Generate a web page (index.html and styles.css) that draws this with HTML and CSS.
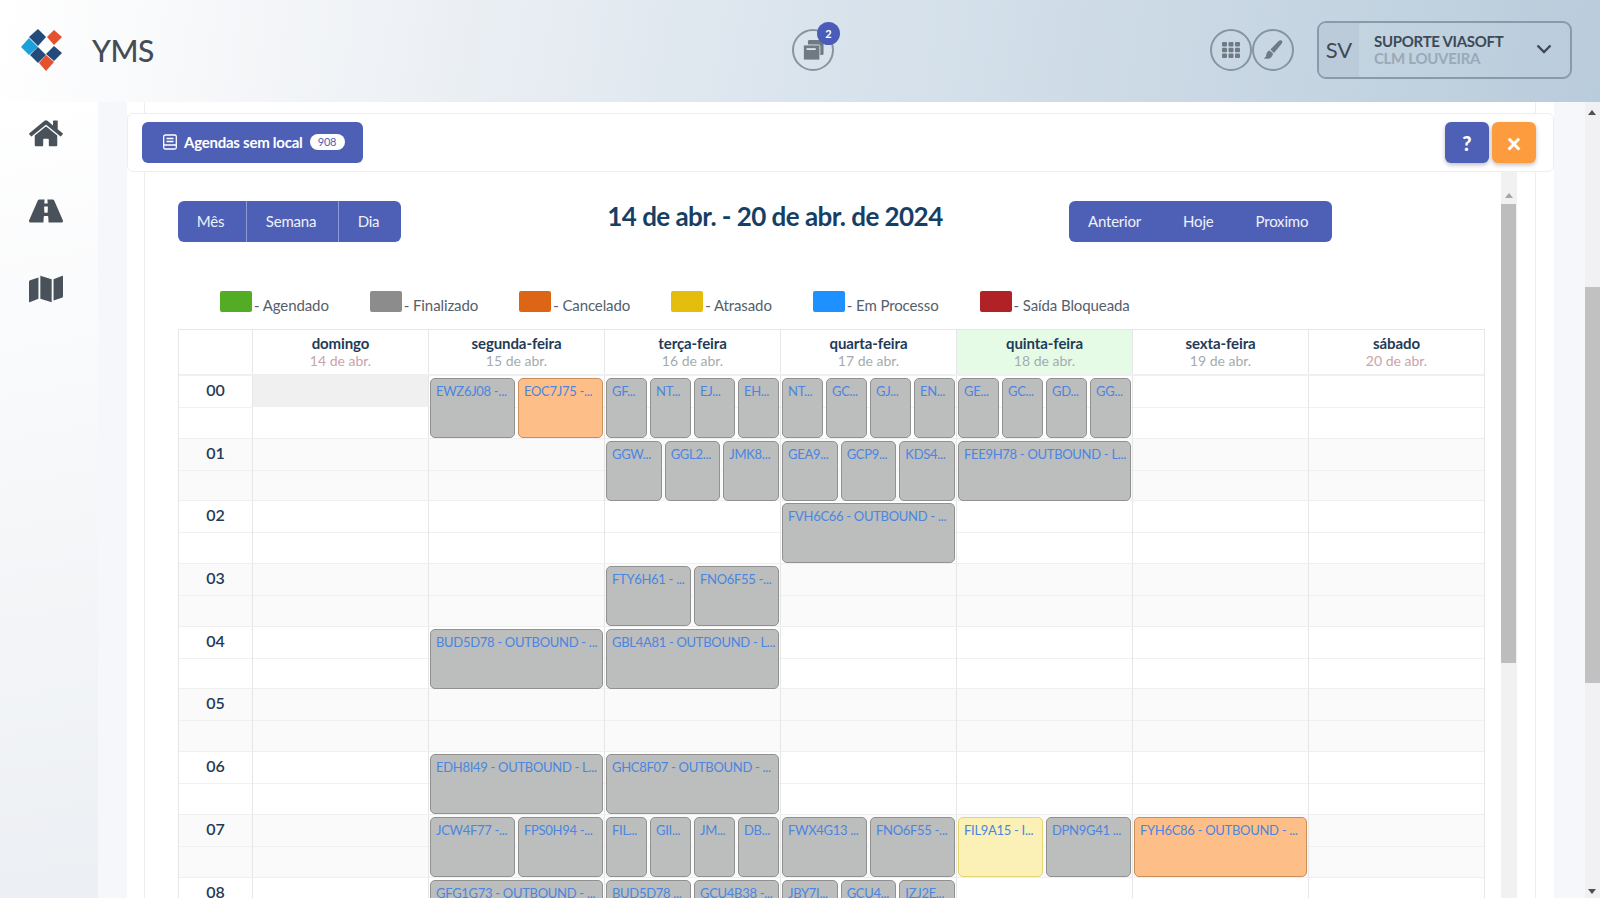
FILE: index.html
```html
<!DOCTYPE html>
<html>

<head>
    <title>YMS</title>
    <meta charset="utf-8">
    <link rel="stylesheet" href="styles.css">
</head>

<body>
    <header class="topo">
        <div class="marca">
            <svg class="logo" viewBox="0 0 42 42" width="42" height="42">
                <path d="M17 0 L25 8 L17 17 L8 8 Z" fill="#234a78" />
                <path d="M33 1 L41 8 L33 16 L26 8 Z" fill="#e5512d" />
                <path d="M8 9 L17 18 L8 26 L0 18 Z" fill="#1ba0dc" />
                <path d="M17 18 L25 26 L17 34 L9 26 Z" fill="#234a78" />
                <path d="M33 17 L41 24 L33 32 L25 25 Z" fill="#234a78" />
                <path d="M25 26 L33 33 L25 42 L18 34 Z" fill="#e5512d" />
            </svg>
            <span class="nome">YMS</span>
        </div>
        <div class="centro">
            <button class="redondo">
                <svg viewBox="0 0 24 24" width="22" height="22">
                    <rect x="6.5" y="1" width="17" height="16.5" rx="1.5" fill="#6f7a85" />
                    <rect x="1.5" y="6.5" width="18" height="16.5" rx="1.5" fill="#6f7a85" stroke="#dbe4ec" />
                    <rect x="5" y="10" width="10" height="2" fill="#dbe4ec" />
                </svg>
                <span class="badge">2</span>
            </button>
        </div>
        <div class="acoes">
            <button class="redondo">
                <svg viewBox="0 0 20 20" width="20" height="20" fill="#6f7a85">
                    <rect x="1" y="2" width="5" height="4.4" rx="1" />
                    <rect x="7.5" y="2" width="5" height="4.4" rx="1" />
                    <rect x="14" y="2" width="5" height="4.4" rx="1" />
                    <rect x="1" y="7.8" width="5" height="4.4" rx="1" />
                    <rect x="7.5" y="7.8" width="5" height="4.4" rx="1" />
                    <rect x="14" y="7.8" width="5" height="4.4" rx="1" />
                    <rect x="1" y="13.6" width="5" height="4.4" rx="1" />
                    <rect x="7.5" y="13.6" width="5" height="4.4" rx="1" />
                    <rect x="14" y="13.6" width="5" height="4.4" rx="1" />
                </svg>
            </button>
            <button class="redondo">
                <svg viewBox="0 0 20 20" width="20" height="20" fill="#6f7a85">
                    <path d="M18.6 .6 C19.6 1.4 19.6 2.4 18.8 3.4 L11 13 L7.4 9.6 L15.6 1 C16.6 .1 17.8 0 18.6 .6 Z" />
                    <path d="M6.6 10.4 L10 13.6 C9.8 16.6 7.4 18.6 3.8 18.8 C2.6 18.8 1.6 18.6 1 18 C2.6 17.6 3 16.8 3.2 15 C3.4 12.6 4.8 10.8 6.6 10.4 Z" />
                </svg>
            </button>
            <div class="usuario">
                <span class="sigla">SV</span>
                <div class="usuario-nome">
                    <strong>SUPORTE VIASOFT</strong>
                    <span>CLM LOUVEIRA</span>
                </div>
                <svg class="seta" viewBox="0 0 16 10" width="16" height="10" fill="none" stroke="#3e4a56" stroke-width="2.4">
                    <path d="M1.5 1.5 L8 8 L14.5 1.5" />
                </svg>
            </div>
        </div>
    </header>

    <div class="meio">
        <nav class="lateral">
            <svg viewBox="0 0 576 512" width="34" height="30" fill="#49525b">
                <path d="M280 148 L96 300 V464 a16 16 0 0 0 16 16 l112 0 a16 16 0 0 0 16 -16 V368 a16 16 0 0 1 16 -16 h64 a16 16 0 0 1 16 16 v96 a16 16 0 0 0 16 16 l112 0 a16 16 0 0 0 16 -16 V300 L296 148 a12 12 0 0 0 -16 0 Z" />
                <path d="M572 261 L488 192 V53 a12 12 0 0 0 -12 -12 h-56 a12 12 0 0 0 -12 12 v73 L318 52 a48 48 0 0 0 -61 0 L4 261 a12 12 0 0 0 -2 17 l26 31 a12 12 0 0 0 17 2 L280 118 a12 12 0 0 1 16 0 L531 311 a12 12 0 0 0 17 -2 l26 -31 a12 12 0 0 0 -2 -17 Z" />
            </svg>
            <svg viewBox="0 -34 576 580" preserveAspectRatio="none" width="34" height="30" fill="#49525b">
                <path d="M573 435 L427 51 C422 40 412 32 400 32 H312 L316 104 a8 8 0 0 1 -8 8 h-40 a8 8 0 0 1 -8 -8 L264 32 H176 C164 32 154 40 149 51 L3 435 C-7 459 10 480 32 480 H244 L251 360 a8 8 0 0 1 8 -8 h58 a8 8 0 0 1 8 8 L332 480 H544 C566 480 583 459 573 435 Z M316 280 a8 8 0 0 1 -8 8 h-40 a8 8 0 0 1 -8 -8 L256 176 a8 8 0 0 1 8 -8 h48 a8 8 0 0 1 8 8 Z" fill-rule="evenodd" />
            </svg>
            <svg viewBox="0 -36 576 584" preserveAspectRatio="none" width="34" height="30" fill="#49525b">
                <path d="M0 118 V496 a16 16 0 0 0 22 15 L160 448 V32 L20 88 a32 32 0 0 0 -20 30 Z M192 448 L384 512 V64 L192 0 Z M554 1 L416 64 V480 L556 424 a32 32 0 0 0 20 -30 V16 a16 16 0 0 0 -22 -15 Z" />
            </svg>
        </nav>

        <main class="conteudo">
            <div class="faixa"></div>
            <div class="barra">
                <button class="btn-agendas">
                    <svg viewBox="0 0 16 16" width="16" height="16" fill="none" stroke="#fff" stroke-width="1.3">
                        <rect x="1.7" y="1" width="12.6" height="14" rx="1.5" />
                        <path d="M4.5 4.5 h7 M4.5 7.5 h7 M1.7 11 h12.6" />
                    </svg>
                    Agendas sem local
                    <span class="pilula">908</span>
                </button>
                <div class="barra-dir">
                    <button class="quadrado azul">?</button>
                    <button class="quadrado laranja">×</button>
                </div>
            </div>

            <section class="painel">
                <div class="rolagem">
                    <div class="controles">
                        <div class="grupo vistas">
                            <button class="b-mes">Mês</button>
                            <button class="b-semana">Semana</button>
                            <button class="b-dia">Dia</button>
                        </div>
                        <h2 class="titulo">14 de abr. - 20 de abr. de 2024</h2>
                        <div class="grupo navega">
                            <button class="b-ant">Anterior</button>
                            <button class="b-hoje">Hoje</button>
                            <button class="b-prox">Proximo</button>
                        </div>
                    </div>

                    <div class="legenda">
                        <div class="leg"><i class="verde"></i> - Agendado</div>
                        <div class="leg"><i class="cinza"></i> - Finalizado</div>
                        <div class="leg"><i class="laranja-esc"></i> - Cancelado</div>
                        <div class="leg"><i class="amarelo"></i> - Atrasado</div>
                        <div class="leg"><i class="azul-claro"></i> - Em Processo</div>
                        <div class="leg"><i class="vermelho"></i> - Saída Bloqueada</div>
                    </div>

                    <div class="agenda">
                        <div class="cabeca">
                            <div class="cab"></div>
                            <div class="cab"><b>domingo</b><span class="fim">14 de abr.</span></div>
                            <div class="cab"><b>segunda-feira</b><span>15 de abr.</span></div>
                            <div class="cab"><b>terça-feira</b><span>16 de abr.</span></div>
                            <div class="cab"><b>quarta-feira</b><span>17 de abr.</span></div>
                            <div class="cab hoje"><b>quinta-feira</b><span>18 de abr.</span></div>
                            <div class="cab"><b>sexta-feira</b><span>19 de abr.</span></div>
                            <div class="cab"><b>sábado</b><span class="fim">20 de abr.</span></div>
                        </div>

                        <div class="hora">
                            <div class="h">00</div>
                            <div class="dia fechado"></div>
                            <div class="dia"><div class="evs"><div class="ev">EWZ6J08 -...</div><div class="ev can">EOC7J75 -...</div></div></div>
                            <div class="dia"><div class="evs"><div class="ev">GF...</div><div class="ev">NT...</div><div class="ev">EJ...</div><div class="ev">EH...</div></div></div>
                            <div class="dia"><div class="evs"><div class="ev">NT...</div><div class="ev">GC...</div><div class="ev">GJ...</div><div class="ev">EN...</div></div></div>
                            <div class="dia"><div class="evs"><div class="ev">GE...</div><div class="ev">GC...</div><div class="ev">GD...</div><div class="ev">GG...</div></div></div>
                            <div class="dia"></div>
                            <div class="dia"></div>
                        </div>
                        <div class="hora par">
                            <div class="h">01</div>
                            <div class="dia"></div>
                            <div class="dia"></div>
                            <div class="dia"><div class="evs"><div class="ev">GGW...</div><div class="ev">GGL2...</div><div class="ev">JMK8...</div></div></div>
                            <div class="dia"><div class="evs"><div class="ev">GEA9...</div><div class="ev">GCP9...</div><div class="ev">KDS4...</div></div></div>
                            <div class="dia"><div class="evs"><div class="ev">FEE9H78 - OUTBOUND - L...</div></div></div>
                            <div class="dia"></div>
                            <div class="dia"></div>
                        </div>
                        <div class="hora">
                            <div class="h">02</div>
                            <div class="dia"></div>
                            <div class="dia"></div>
                            <div class="dia"></div>
                            <div class="dia"><div class="evs"><div class="ev">FVH6C66 - OUTBOUND - ...</div></div></div>
                            <div class="dia"></div>
                            <div class="dia"></div>
                            <div class="dia"></div>
                        </div>
                        <div class="hora par">
                            <div class="h">03</div>
                            <div class="dia"></div>
                            <div class="dia"></div>
                            <div class="dia"><div class="evs"><div class="ev">FTY6H61 - ...</div><div class="ev">FNO6F55 -...</div></div></div>
                            <div class="dia"></div>
                            <div class="dia"></div>
                            <div class="dia"></div>
                            <div class="dia"></div>
                        </div>
                        <div class="hora">
                            <div class="h">04</div>
                            <div class="dia"></div>
                            <div class="dia"><div class="evs"><div class="ev">BUD5D78 - OUTBOUND - ...</div></div></div>
                            <div class="dia"><div class="evs"><div class="ev">GBL4A81 - OUTBOUND - L...</div></div></div>
                            <div class="dia"></div>
                            <div class="dia"></div>
                            <div class="dia"></div>
                            <div class="dia"></div>
                        </div>
                        <div class="hora par">
                            <div class="h">05</div>
                            <div class="dia"></div>
                            <div class="dia"></div>
                            <div class="dia"></div>
                            <div class="dia"></div>
                            <div class="dia"></div>
                            <div class="dia"></div>
                            <div class="dia"></div>
                        </div>
                        <div class="hora">
                            <div class="h">06</div>
                            <div class="dia"></div>
                            <div class="dia"><div class="evs"><div class="ev">EDH8I49 - OUTBOUND - L...</div></div></div>
                            <div class="dia"><div class="evs"><div class="ev">GHC8F07 - OUTBOUND - ...</div></div></div>
                            <div class="dia"></div>
                            <div class="dia"></div>
                            <div class="dia"></div>
                            <div class="dia"></div>
                        </div>
                        <div class="hora par">
                            <div class="h">07</div>
                            <div class="dia"></div>
                            <div class="dia"><div class="evs"><div class="ev">JCW4F77 -...</div><div class="ev">FPS0H94 -...</div></div></div>
                            <div class="dia"><div class="evs"><div class="ev">FIL...</div><div class="ev">GII...</div><div class="ev">JM...</div><div class="ev">DB...</div></div></div>
                            <div class="dia"><div class="evs"><div class="ev">FWX4G13 ...</div><div class="ev">FNO6F55 -...</div></div></div>
                            <div class="dia"><div class="evs"><div class="ev atr">FIL9A15 - I...</div><div class="ev">DPN9G41 ...</div></div></div>
                            <div class="dia"><div class="evs"><div class="ev can">FYH6C86 - OUTBOUND - ...</div></div></div>
                            <div class="dia"></div>
                        </div>
                        <div class="hora">
                            <div class="h">08</div>
                            <div class="dia"></div>
                            <div class="dia"><div class="evs"><div class="ev">GFG1G73 - OUTBOUND - ...</div></div></div>
                            <div class="dia"><div class="evs"><div class="ev">BUD5D78 ...</div><div class="ev">GCU4B38 -...</div></div></div>
                            <div class="dia"><div class="evs"><div class="ev">JBY7I...</div><div class="ev">GCU4...</div><div class="ev">IZJ2E...</div></div></div>
                            <div class="dia"></div>
                            <div class="dia"></div>
                            <div class="dia"></div>
                        </div>
                    </div>
                </div>
                <div class="trilho">
                    <span class="seta-cima"></span>
                    <div class="polegar"></div>
                </div>
            </section>
        </main>

        <div class="trilho-pagina">
            <span class="seta-cima preta"></span>
            <div class="polegar-pagina"></div>
            <span class="seta-baixo"></span>
        </div>
    </div>
</body>

</html>
```

FILE: styles.css
```css
* {
    box-sizing: border-box;
}

html,
body {
    margin: 0;
    height: 100%;
    overflow: hidden;
}

body {
    display: flex;
    flex-direction: column;
    font-family: Lato, "Open Sans", sans-serif;
    color: #1f3b57;
    background-color: #f6f7fa;
}

button {
    font-family: inherit;
    border: none;
    color: #fff;
    padding: 0;
}

/* topo */
.topo {
    flex: 0 0 102px;
    display: flex;
    align-items: center;
    padding-right: 28px;
    padding-bottom: 2px;
    background: linear-gradient(100deg, #ffffff 0%, #eef1f5 25%, #dae4ed 50%, #b9ccdb 100%);
}

.marca {
    width: 792px;
    display: flex;
    align-items: center;
    padding-left: 21px;
}

.nome {
    margin-left: 29px;
    font-size: 30px;
    font-weight: 500;
    color: #444c55;
    letter-spacing: -0.5px;
}

.centro {
    flex: 1;
}

.acoes {
    display: flex;
    align-items: center;
}

.redondo {
    position: relative;
    width: 42px;
    height: 42px;
    border: 2px solid #8795a3;
    border-radius: 50%;
    background: transparent;
    display: flex;
    align-items: center;
    justify-content: center;
}

.badge {
    position: absolute;
    top: -9px;
    right: -8px;
    width: 23px;
    height: 23px;
    border-radius: 50%;
    background-color: #4a5cb8;
    color: #fff;
    font-size: 11px;
    font-weight: 700;
    line-height: 23px;
    text-align: center;
}

.usuario {
    width: 255px;
    height: 58px;
    margin-left: 23px;
    display: flex;
    align-items: center;
    border: 2px solid #8a9aa9;
    border-radius: 9px;
    overflow: hidden;
}

.sigla {
    flex: 0 0 40px;
    align-self: stretch;
    display: flex;
    align-items: center;
    justify-content: center;
    padding-bottom: 2px;
    background-color: #bccbd9;
    font-size: 22px;
    color: #3e4a56;
}

.usuario-nome {
    flex: 1;
    padding-left: 15px;
    display: flex;
    flex-direction: column;
    font-size: 15px;
    line-height: 17px;
    letter-spacing: -0.3px;
    color: #9aa9b6;
    font-weight: 700;
}

.usuario-nome strong {
    color: #3e4a56;
    font-weight: 700;
}

.seta {
    margin-right: 18px;
    margin-bottom: 3px;
}

/* lateral e conteudo */
.meio {
    flex: 1;
    display: flex;
    min-height: 0;
}

.lateral {
    flex: 0 0 98px;
    padding-top: 16px;
    padding-right: 6px;
    display: flex;
    flex-direction: column;
    align-items: center;
    gap: 48px;
    background: linear-gradient(170deg, #ffffff 0%, #eceff3 100%);
}

.conteudo {
    width: 1427px;
    margin-left: 29px;
    background-color: #fff;
    display: flex;
    flex-direction: column;
    min-height: 0;
}

.faixa {
    flex: 0 0 11px;
    margin-left: 17px;
    margin-right: 18px;
    border-left: 1px solid #eee;
    border-right: 1px solid #eee;
}

.barra {
    flex: 0 0 59px;
    display: flex;
    align-items: center;
    justify-content: space-between;
    padding: 0 17px 0 14px;
    border: 1px solid #eeeeee;
    border-radius: 6px;
}

.btn-agendas {
    width: 221px;
    height: 41px;
    display: flex;
    align-items: center;
    padding: 0 0 2px 20px;
    gap: 6px;
    border-radius: 6px;
    background-color: #4e60b5;
    font-size: 15px;
    font-weight: 700;
    letter-spacing: -0.25px;
    white-space: nowrap;
}

.pilula {
    margin-left: 1px;
    width: 35px;
    height: 16px;
    border-radius: 8px;
    background-color: #fff;
    color: #4e60b5;
    font-size: 11px;
    font-weight: 400;
    line-height: 16px;
    text-align: center;
}

.barra-dir {
    display: flex;
    gap: 3px;
}

.quadrado {
    width: 44px;
    height: 41px;
    border-radius: 6px;
    font-size: 20px;
    font-weight: 900;
    box-shadow: 0 2px 4px rgba(0, 0, 0, .25);
}

.azul {
    background-color: #4e60b5;
}

.laranja {
    background-color: #fd9c3f;
    font-size: 26px;
}

.painel {
    flex: 1;
    min-height: 0;
    margin: 0 18px 0 17px;
    display: flex;
    padding-left: 33px;
    border-left: 1px solid #eee;
    border-right: 1px solid #eee;
    overflow: hidden;
}

.rolagem {
    width: 1307px;
    flex: none;
}

.controles {
    height: 41px;
    margin-top: 29px;
    display: flex;
    align-items: center;
}

.grupo {
    display: flex;
    height: 41px;
    border-radius: 6px;
    overflow: hidden;
    background-color: #4e60b5;
}

.grupo button {
    background: transparent;
    font-size: 15px;
    letter-spacing: -0.2px;
    color: #eef0fa;
    padding-bottom: 2px;
}

.vistas button {
    padding-right: 3px;
}

.b-mes {
    width: 68px;
}

.b-semana {
    width: 93px;
    border-left: 1px solid #8f9bd6;
    border-right: 1px solid #8f9bd6;
}

.b-dia {
    width: 62px;
}

.titulo {
    width: 668px;
    margin: -12px 0 0;
    padding-left: 80px;
    text-align: center;
    font-size: 26px;
    font-weight: 700;
    letter-spacing: -0.55px;
    color: #163f66;
}

.navega {
    width: 263px;
    padding-left: 19px;
    gap: 42px;
}

.legenda {
    display: flex;
    height: 38px;
    margin-top: 49px;
    padding-left: 42px;
    font-size: 15px;
    color: #56606a;
    letter-spacing: -0.1px;
}

.leg {
    display: flex;
    align-items: flex-end;
    gap: 2px;
    height: 23px;
    margin-right: 41px;
    white-space: nowrap;
}

.leg i {
    width: 32px;
    height: 21px;
    margin-bottom: 2px;
    border-radius: 2px;
}

.verde {
    background-color: #53ad24;
}

.cinza {
    background-color: #8c8c8c;
}

.laranja-esc {
    background-color: #dd6516;
}

.amarelo {
    background-color: #e5bd0d;
}

.azul-claro {
    background-color: #1e90ff;
}

.vermelho {
    background-color: #b02225;
}

/* agenda */
.agenda {
    border-left: 1px solid #e6e6e6;
    border-right: 1px solid #e6e6e6;
    border-top: 1px solid #e6e6e6;
}

.cabeca,
.hora {
    display: grid;
    grid-template-columns: 73px repeat(7, 1fr);
}

.cabeca {
    height: 46px;
    border-bottom: 2px solid #f0f0f0;
}

.cab {
    display: flex;
    flex-direction: column;
    align-items: center;
    justify-content: center;
    border-left: 1px solid #e6e6e6;
    line-height: 18px;
}

.cab:first-child {
    border-left: none;
}

.cab b {
    font-size: 15px;
    font-weight: 700;
    letter-spacing: -0.1px;
}

.cab span {
    font-size: 14px;
    color: #a3acb1;
}

.cab span.fim {
    color: #c9a3ac;
}

.hoje {
    background-color: #e6fbe6;
}

.hora {
    height: 62.7px;
    border-bottom: 1px solid #efefef;
}

.par {
    background-color: #fafafa;
}

.h {
    padding-top: 4px;
    text-align: center;
    font-size: 16px;
    font-weight: 600;
    line-height: 20px;
    background: linear-gradient(transparent 31px, #f1f1f1 31px, #f1f1f1 32px, transparent 32px);
}

.dia {
    position: relative;
    border-left: 1px solid #e6e6e6;
    background: linear-gradient(transparent 31px, #f1f1f1 31px, #f1f1f1 32px, transparent 32px);
}

.fechado {
    background: linear-gradient(#f0f0f0 31px, transparent 31px);
}

.evs {
    position: absolute;
    top: 2px;
    left: 1px;
    right: 1px;
    height: 60px;
    display: flex;
    gap: 3px;
}

.ev {
    flex: 1 1 0;
    min-width: 0;
    padding: 3px 0 0 5px;
    overflow: hidden;
    white-space: nowrap;
    background-color: #bcbdbd;
    border: 1px solid #919191;
    border-radius: 5px;
    color: #4a86e0;
    font-size: 13px;
    line-height: 18px;
    letter-spacing: -0.3px;
}

.can {
    background-color: #fdbf87;
    border-color: #c98f5b;
}

.atr {
    background-color: #fbf0b5;
    border-color: #e6d56d;
}

/* barras de rolagem */
.trilho {
    flex: 0 0 16px;
    margin-left: 16px;
    background-color: #f1f1f1;
    position: relative;
}

.polegar {
    position: absolute;
    top: 32px;
    left: 0;
    right: 1px;
    height: 459px;
    background-color: #bdbdbd;
}

.seta-cima {
    position: absolute;
    top: 21px;
    left: 4px;
    border-left: 4px solid transparent;
    border-right: 4px solid transparent;
    border-bottom: 5px solid #a6a6a6;
}

.trilho-pagina {
    position: relative;
    width: 15px;
    margin-left: 31px;
    background-color: #f1f1f3;
}

.polegar-pagina {
    position: absolute;
    top: 185px;
    left: 0;
    right: 0;
    height: 396px;
    background-color: #c1c1c1;
}

.seta-cima.preta {
    top: 8px;
    left: 3px;
    border-bottom-color: #505050;
}

.seta-baixo {
    position: absolute;
    bottom: 4px;
    left: 3px;
    border-left: 4px solid transparent;
    border-right: 4px solid transparent;
    border-top: 5px solid #505050;
}
```
